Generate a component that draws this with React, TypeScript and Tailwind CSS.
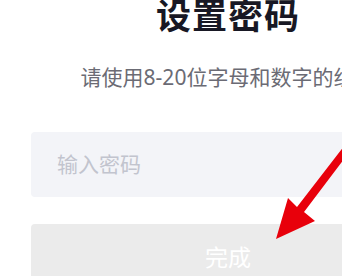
import React from 'react';

const font = { fontFamily: '"Noto Sans", "Noto Sans CJK SC", sans-serif' };

function PointerArrow() {
  return (
    <svg
      className="absolute left-0 top-0 pointer-events-none"
      width={342}
      height={276}
      viewBox="0 0 342 276"
    >
      <polygon
        points="276,239 288,198 297,207 348,141 354,146 304,212 315,221"
        fill="#e8000b"
      />
    </svg>
  );
}

export default function App() {
  return (
    <div className="relative w-[342px] h-[276px] overflow-hidden bg-white" style={font}>
      <div className="w-[456px] px-[31px] flex flex-col items-center">
        <h1 className="mt-[-4px] text-[35px] leading-[40px] font-bold text-[#181824] tracking-[1px]">
          设置密码
        </h1>
        <p className="mt-[26px] text-[21px] leading-[30px] text-[#6b6b74] whitespace-nowrap">
          请使用8-20位字母和数字的组合
        </p>
        <div className="mt-[40px] w-full h-[65px] rounded-[4px] bg-[#f3f4f8] flex items-center px-[26px]">
          <input
            type="password"
            placeholder="输入密码"
            className="w-full bg-transparent outline-none text-[21px] text-[#333] placeholder:text-[#c2c4ce]"
            style={font}
          />
        </div>
        <button className="mt-[27px] w-full h-[66px] rounded-[4px] bg-[#ebebeb] text-white text-[23px] flex items-center justify-center">
          完成
        </button>
      </div>
      <PointerArrow />
    </div>
  );
}
